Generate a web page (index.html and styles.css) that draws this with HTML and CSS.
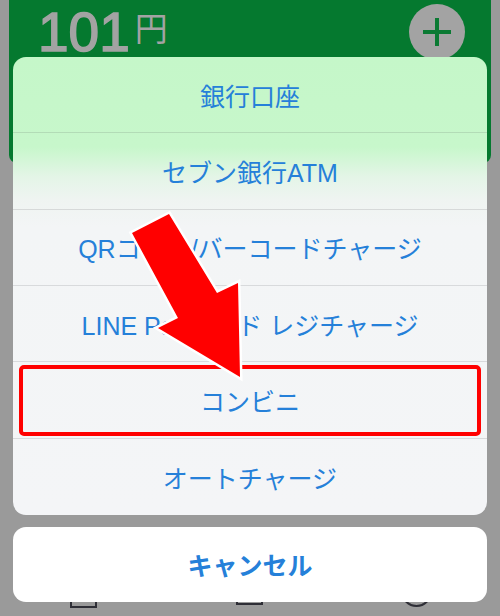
FILE: index.html
```html
<!DOCTYPE html>
<html lang="ja">
<head>
<meta charset="utf-8">
<link rel="stylesheet" href="styles.css">
</head>
<body>
<div class="card">
  <div class="amount"><span class="num">101</span><span class="yen">円</span></div>
  <div class="plus"><span class="plus-h"></span><span class="plus-v"></span></div>
</div>
<div class="tabbar">
  <div class="tab"><span class="sq sq1"></span></div>
  <div class="tab"><span class="sq sq2"></span></div>
  <div class="tab"><span class="ring"></span></div>
</div>

<div class="overlay">
  <div class="sheet">
    <div class="row">銀行口座</div>
    <div class="row">セブン銀行ATM</div>
    <div class="row">QRコード/バーコードチャージ</div>
    <div class="row">LINE Payカード レジチャージ</div>
    <div class="row row-hl">コンビニ<span class="hl"></span></div>
    <div class="row">オートチャージ</div>
  </div>
  <div class="cancel">キャンセル</div>
</div>

<svg class="arrow" width="500" height="616" viewBox="0 0 500 616">
  <polygon points="169,214 217,293 238,283 240,377 158,328 178,318 132,233" fill="#ff0000" stroke="#ffffff" stroke-width="5" stroke-linejoin="miter" paint-order="stroke"/>
</svg>
</body>
</html>
```
FILE: styles.css
```css
html, body {
  margin: 0;
  padding: 0;
}
body {
  width: 500px;
  height: 616px;
  overflow: hidden;
  position: relative;
  background: #9a9a9a;
  display: flex;
  flex-direction: column;
  font-family: "Liberation Sans", "Noto Sans CJK JP", sans-serif;
}
.card {
  margin: 0 9px;
  height: 163px;
  background: #05792f;
  border-radius: 0 0 8px 8px;
  display: flex;
  justify-content: space-between;
  align-items: flex-start;
  padding: 0 26px 0 29px;
  flex-shrink: 0;
}
.amount {
  display: flex;
  align-items: flex-start;
  color: #a3a3a3;
}
.num {
  font-family: "Liberation Sans", sans-serif;
  font-size: 55px;
  line-height: normal;
  -webkit-text-stroke: 1.5px #a3a3a3;
}
.yen {
  font-family: "Noto Sans CJK JP", sans-serif;
  font-size: 33px;
  line-height: 1;
  margin-top: 11px;
  margin-left: 5px;
}
.plus {
  width: 56px;
  height: 56px;
  border-radius: 50%;
  background: #a3a3a3;
  margin-top: 4px;
  position: relative;
}
.plus-h, .plus-v {
  position: absolute;
  background: #0b7a33;
}
.plus-h {
  left: 14px;
  top: 26px;
  width: 28px;
  height: 4px;
}
.plus-v {
  left: 26px;
  top: 14px;
  width: 4px;
  height: 28px;
}
.tabbar {
  margin-top: auto;
  height: 34px;
  display: grid;
  grid-template-columns: 1fr 1fr 1fr;
}
.tab {
  display: flex;
  justify-content: center;
  align-items: flex-start;
}
.sq {
  width: 23px;
  height: 22px;
  border: 2px solid #2e2e36;
  display: block;
}
.sq2 {
  margin-top: -3px;
}
.ring {
  width: 27px;
  height: 27px;
  border: 2px solid #2e2e36;
  border-radius: 50%;
  margin-top: -6px;
  box-shadow: inset 0 0 0 3px #9a9a9a, inset 0 0 0 5px #2e2e36;
}
.overlay {
  position: absolute;
  left: 0;
  top: 0;
  width: 500px;
  height: 616px;
  box-sizing: border-box;
  padding: 57px 13px 0;
  display: flex;
  flex-direction: column;
  gap: 12px;
}
.sheet {
  border-radius: 13px;
  overflow: hidden;
  background: linear-gradient(180deg, #c5f7c9 0px, #c7f7cb 90px, #e4f5e7 120px, #eff4f1 142px, #f3f5f6 170px, #f4f5f7 458px);
}
.row {
  height: 76.33px;
  box-sizing: border-box;
  display: flex;
  align-items: center;
  justify-content: center;
  color: #2580d9;
  font-size: 25px;
  border-bottom: 1px solid rgba(60, 60, 67, 0.14);
}
.row:last-child {
  border-bottom: none;
}
.row-hl {
  position: relative;
}
.hl {
  position: absolute;
  left: 6px;
  right: 6px;
  top: 3px;
  bottom: 2px;
  border: 4px solid #ff0000;
  border-radius: 5px;
}
.cancel {
  height: 75px;
  border-radius: 13px;
  background: #ffffff;
  display: flex;
  align-items: center;
  justify-content: center;
  color: #2580d9;
  font-size: 25px;
  font-weight: 700;
}
.arrow {
  position: absolute;
  left: 0;
  top: 0;
}
```
